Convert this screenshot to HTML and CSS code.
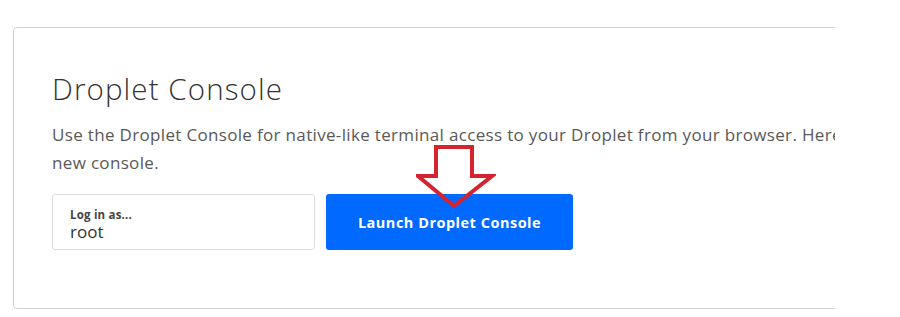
FILE: index.html
```html
<!DOCTYPE html>
<html lang="en">
<head>
  <meta charset="UTF-8">
  <title>Droplet Console</title>
  <link rel="stylesheet" href="styles.css">
</head>
<body>
  <div class="frame">
    <div class="card">
      <h2 class="title">Droplet Console</h2>
      <p class="desc"><span class="line">Use the Droplet Console for native-like terminal access to your Droplet from your browser. Here you can try out the</span><br>new console.</p>
      <div class="actions">
        <label class="login">
          <span class="login-label">Log in as...</span>
          <span class="login-value">root</span>
        </label>
        <button class="launch">Launch Droplet Console</button>
        <svg class="arrow" width="80" height="66" viewBox="0 0 80 66">
          <path d="M20 3 H56 V32 H76 L38 62 L2 32 H20 Z" fill="none" stroke="#d42430" stroke-width="4" stroke-linejoin="miter"/>
        </svg>
      </div>
    </div>
  </div>
</body>
</html>
```

FILE: styles.css
```css
* {
  padding: 0;
  margin: 0;
  box-sizing: border-box;
}

body {
  background: #fff;
  font-family: "Open Sans", "Liberation Sans", sans-serif;
}

.frame {
  width: 835px;
  height: 317px;
  overflow: hidden;
  padding: 27px 0 0 13px;
}

.card {
  width: 1000px;
  height: 282px;
  border: 1px solid #cfcfcf;
  border-radius: 4px;
  padding: 42px 38px 0;
}

.title {
  font-size: 29.5px;
  font-weight: 300;
  letter-spacing: 1.1px;
  color: #333;
  line-height: 38px;
}

.desc {
  margin-top: 13px;
  font-size: 17px;
  letter-spacing: 0.33px;
  line-height: 28px;
  color: #595959;
}

.desc .line {
  white-space: nowrap;
}

.actions {
  position: relative;
  display: flex;
  gap: 11px;
  margin-top: 17px;
}

.login {
  display: flex;
  flex-direction: column;
  justify-content: center;
  width: 263px;
  height: 56px;
  padding: 4px 17px 0;
  border: 1px solid #dedede;
  border-radius: 3px;
}

.login-label {
  font-size: 11.5px;
  font-weight: 700;
  letter-spacing: 0.2px;
  color: #444;
  line-height: 14px;
}

.login-value {
  font-size: 17px;
  color: #333;
  line-height: 19px;
}

.launch {
  width: 247px;
  height: 56px;
  border: none;
  border-radius: 3px;
  background: #0069ff;
  color: #fff;
  font-family: inherit;
  font-size: 14.5px;
  font-weight: 700;
  letter-spacing: 0.5px;
}

.arrow {
  position: absolute;
  left: 364px;
  top: -50px;
}
```
